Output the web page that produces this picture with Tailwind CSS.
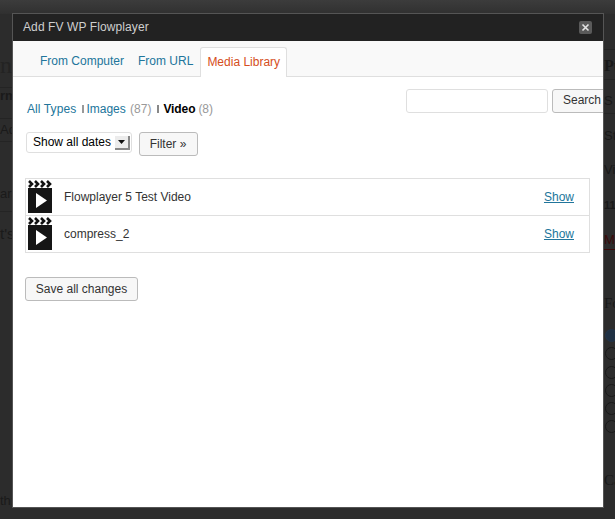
<!DOCTYPE html>
<html lang="en">
  <head>
    <meta charset="UTF-8" />
    <title>Add FV WP Flowplayer</title>
    <script src="https://cdn.jsdelivr.net/npm/@tailwindcss/browser@4"></script>
  </head>
  <body class="relative w-[615px] h-[519px] overflow-hidden bg-[#2c2c2c] font-['Liberation_Sans',Arial,sans-serif]">
    <!-- page dimmed behind the modal -->
    <div class="absolute inset-x-0 top-0 h-[14px] bg-gradient-to-b from-[#3c3c3c] to-[#303030]"></div>
    <div class="absolute left-0 top-[50px] text-[24px] leading-[30px] text-[#232323] font-['Liberation_Serif',serif]">nt</div>
    <div class="absolute left-0 top-[87px] w-[13px] h-px bg-[#242424]"></div>
    <div class="absolute left-0 top-[88px] text-[13px] leading-[16px] font-bold text-[#1a1a1a]">rm</div>
    <div class="absolute left-0 top-[118px] w-[13px] h-px bg-[#242424]"></div>
    <div class="absolute left-0 top-[122px] text-[13px] leading-[16px] text-[#1a1a1a]">Ad</div>
    <div class="absolute left-0 top-[141px] w-[13px] h-px bg-[#242424]"></div>
    <div class="absolute left-0 top-[186px] text-[13px] leading-[16px] text-[#1a1a1a]">ara</div>
    <div class="absolute left-0 top-[211px] w-[13px] h-px bg-[#242424]"></div>
    <div class="absolute left-0 top-[225px] text-[15px] leading-[18px] text-[#1a1a1a]">t's</div>
    <div class="absolute left-0 top-[493px] text-[13px] leading-[16px] text-[#1a1a1a]">th:</div>
    <div class="absolute left-[604px] top-[49px] w-[11px] h-px bg-[#242424]"></div>
    <div class="absolute left-[604px] top-[56px] text-[16px] leading-[20px] font-bold text-[#191919] font-['Liberation_Serif',serif]">Pu</div>
    <div class="absolute left-[604px] top-[79px] w-[11px] h-px bg-[#242424]"></div>
    <div class="absolute left-[604px] top-[93px] text-[13px] leading-[16px] text-[#191919]">S</div>
    <div class="absolute left-[604px] top-[113px] w-[11px] h-px bg-[#242424]"></div>
    <div class="absolute left-[604px] top-[128px] text-[13px] leading-[16px] text-[#191919]">St</div>
    <div class="absolute left-[604px] top-[162px] text-[13px] leading-[16px] text-[#191919]">Vi</div>
    <div class="absolute left-[604px] top-[198px] text-[11px] leading-[14px] font-bold text-[#191919]">11</div>
    <div class="absolute left-[604px] top-[232px] text-[13px] leading-[16px] text-[#3a0a0a]">M</div>
    <div class="absolute left-[604px] top-[249px] w-[11px] h-px bg-[#3a0a0a]"></div>
    <div class="absolute left-[604px] top-[293px] text-[15px] leading-[20px] text-[#191919] font-['Liberation_Serif',serif]">Fo</div>
    <div class="absolute left-[605px] top-[329px] flex flex-col gap-[5.3px]">
      <div class="w-[13px] h-[13px] rounded-full border border-[#22344a] bg-[#1f3043]"></div>
      <div class="w-[13px] h-[13px] rounded-full border border-[#191919]"></div>
      <div class="w-[13px] h-[13px] rounded-full border border-[#191919]"></div>
      <div class="w-[13px] h-[13px] rounded-full border border-[#191919]"></div>
      <div class="w-[13px] h-[13px] rounded-full border border-[#191919]"></div>
      <div class="w-[13px] h-[13px] rounded-full border border-[#191919]"></div>
    </div>
    <div class="absolute left-[604px] top-[470px] text-[15px] leading-[20px] text-[#191919] font-['Liberation_Serif',serif]">Ca</div>

    <!-- modal -->
    <div class="absolute left-[12px] top-[13px] w-[592px] h-[495px] border border-[#555] bg-white flex flex-col overflow-hidden">
      <div class="h-[27px] shrink-0 bg-[#222] flex items-center justify-between pl-[10px] pr-[11px]">
        <span class="-mt-[2px] text-[12px] text-[#cfcfcf] tracking-[0.1px]">Add FV WP Flowplayer</span>
        <span class="w-[13px] h-[13px] rounded-[2px] bg-[#5a5a5a] flex items-center justify-center">
          <svg width="9" height="9" viewBox="0 0 9 9"><path d="M1.5 1.5l6 6M7.5 1.5l-6 6" stroke="#e4e4e4" stroke-width="1.6"/></svg>
        </span>
      </div>

      <div class="h-[36px] shrink-0 bg-[#f9f9f9] border-b border-[#dfdfdf] flex items-end pl-[21px] text-[12px] leading-[28px] text-[#21759b]">
        <a class="px-[6px] h-[29px]">From Computer</a>
        <a class="ml-[2px] px-[6px] h-[29px]">From URL</a>
        <a class="ml-[1px] px-[6px] h-[30px] -mb-px bg-white border border-b-0 border-[#dfdfdf] rounded-t-[3px] text-[#d54e21]">Media Library</a>
      </div>

      <div class="relative flex-1 px-[12px] text-[12px]">
        <div class="absolute left-[393px] top-[12px] flex gap-[4px]">
          <div class="w-[142px] h-[24px] bg-white border border-[#dfdfdf] rounded-[3px]"></div>
          <div class="w-[60px] h-[24px] bg-[#f7f7f7] border border-[#bbb] rounded-[3px] pl-[10px] leading-[21px] text-[#333]">Search</div>
        </div>

        <div class="flex items-center h-[16px] mt-[24px] ml-[2px] text-[#21759b]">
          <a class="tracking-[0.1px]">All Types</a>
          <span class="ml-[6px] w-[2px] h-[8px] bg-[#999]"></span>
          <a class="ml-[2px]">Images <span class="ml-[1px] text-[#999]">(87)</span></a>
          <span class="ml-[6px] w-[2px] h-[8px] bg-[#888]"></span>
          <a class="ml-[4px] font-bold text-black tracking-[-0.1px]">Video</a>
          <span class="ml-[3px] text-[#999]">(8)</span>
        </div>

        <div class="flex items-start mt-[15px] ml-[1px]">
          <div class="w-[106px] h-[21px] bg-white border border-[#dfdfdf] rounded-[3px] flex items-center justify-between pl-[6px] pr-[1px] text-black">
            <span class="-mt-[2px]">Show all dates</span>
            <span class="w-[15px] h-[14px] bg-[#ececec] border-r-2 border-b-2 border-[#888] flex items-center justify-center">
              <svg width="7" height="4" viewBox="0 0 7 4"><path d="M0 0h7L3.500 4z" fill="#111"/></svg>
            </span>
          </div>
          <div class="ml-[7px] w-[59px] h-[24px] bg-[#f7f7f7] border border-[#bbb] rounded-[3px] pr-[1px] text-center leading-[23px] text-[#333]">Filter »</div>
        </div>

        <div class="mt-[22px] w-[565px] border border-[#dfdfdf] text-[#333]">
          <div class="h-[37px] border-b border-[#dfdfdf] flex items-center pl-[2px] pr-[15px]">
            <svg width="25" height="33" viewBox="0 0 25 33" class="shrink-0 -mt-[1px]">
              <path d="M1 1l3 3-3 3M7 1l3 3-3 3M13 1l3 3-3 3M19 1l3 3-3 3" fill="none" stroke="#111" stroke-width="2.600"/>
              <rect x="0" y="8" width="24" height="25" fill="#151515"/>
              <path d="M8 13l11 7.500-11 7.500z" fill="#fff"/>
            </svg>
            <span class="ml-[11px] flex-1">Flowplayer 5 Test Video</span>
            <a class="underline text-[#21759b]">Show</a>
          </div>
          <div class="h-[36px] flex items-center pl-[2px] pr-[15px]">
            <svg width="25" height="33" viewBox="0 0 25 33" class="shrink-0 -mt-[1px]">
              <path d="M1 1l3 3-3 3M7 1l3 3-3 3M13 1l3 3-3 3M19 1l3 3-3 3" fill="none" stroke="#111" stroke-width="2.600"/>
              <rect x="0" y="8" width="24" height="25" fill="#151515"/>
              <path d="M8 13l11 7.500-11 7.500z" fill="#fff"/>
            </svg>
            <span class="ml-[11px] flex-1">compress_2</span>
            <a class="underline text-[#21759b]">Show</a>
          </div>
        </div>

        <div class="mt-[24px] w-[113px] h-[24px] bg-[#f7f7f7] border border-[#bbb] rounded-[3px] text-center leading-[23px] text-[#333]">Save all changes</div>
      </div>
    </div>
  </body>
</html>
